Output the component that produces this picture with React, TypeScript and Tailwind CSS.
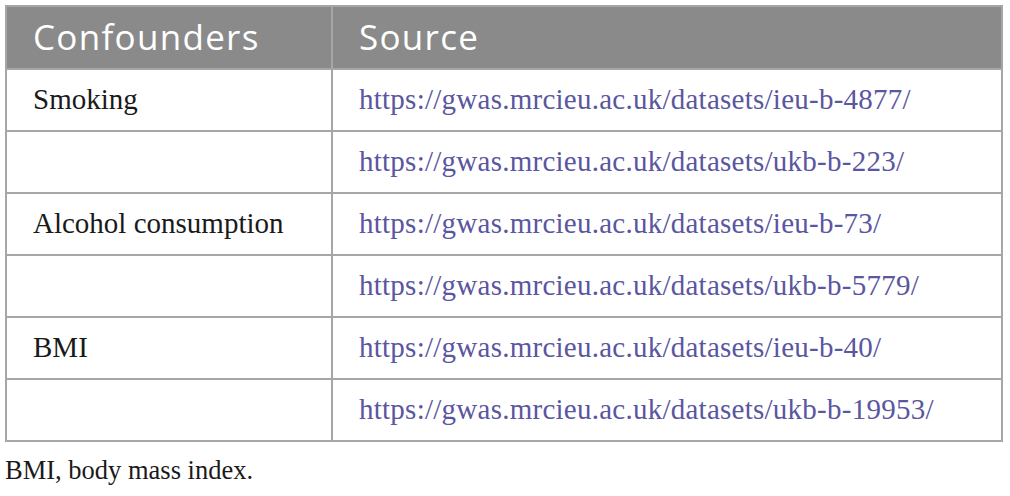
const rows = [
  { name: 'Smoking', url: 'https://gwas.mrcieu.ac.uk/datasets/ieu-b-4877/' },
  { name: '', url: 'https://gwas.mrcieu.ac.uk/datasets/ukb-b-223/' },
  { name: 'Alcohol consumption', url: 'https://gwas.mrcieu.ac.uk/datasets/ieu-b-73/' },
  { name: '', url: 'https://gwas.mrcieu.ac.uk/datasets/ukb-b-5779/' },
  { name: 'BMI', url: 'https://gwas.mrcieu.ac.uk/datasets/ieu-b-40/' },
  { name: '', url: 'https://gwas.mrcieu.ac.uk/datasets/ukb-b-19953/' },
];

export default function App() {
  return (
    <div className="w-[1010px] h-[496px] bg-white pt-[5px] pl-[5px] font-['Liberation_Serif',serif]">
      <table className="w-[998px] border-collapse border-2 border-[#a6a6a6]">
        <thead>
          <tr className="h-[63px] bg-[#8a8a8a] text-white font-['Open_Sans',sans-serif] text-[35px] tracking-[1.3px]">
            <th className="w-[326px] border-2 border-[#a6a6a6] pl-[26px] text-left font-normal">Confounders</th>
            <th className="border-2 border-[#a6a6a6] pl-[26px] text-left font-normal">Source</th>
          </tr>
        </thead>
        <tbody className="text-[29px]">
          {rows.map(r => (
            <tr key={r.url} className="h-[62px]">
              <td className="border-2 border-[#a6a6a6] pl-[26px] text-[#1a1a1a]">{r.name}</td>
              <td className="border-2 border-[#a6a6a6] pl-[26px] text-[#5a56a0] tracking-[0.25px]">{r.url}</td>
            </tr>
          ))}
        </tbody>
      </table>
      <p className="mt-[9px] text-[26.5px] text-[#1a1a1a]">BMI, body mass index.</p>
    </div>
  );
}
